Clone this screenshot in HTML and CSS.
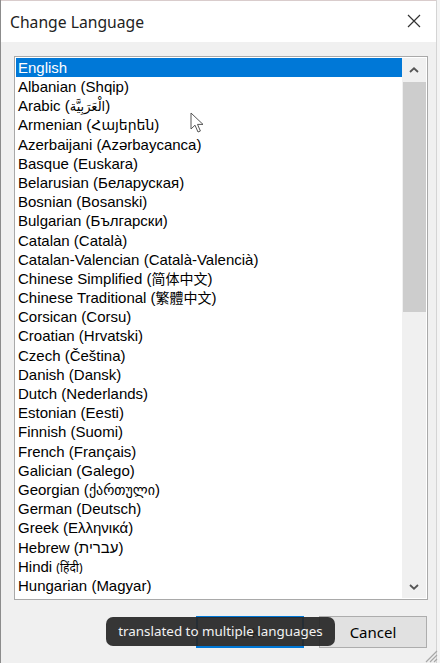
FILE: index.html
```html
<!DOCTYPE html>
<html>
<head>
<meta charset="utf-8">
<link rel="stylesheet" href="styles.css">
</head>
<body>
<div class="dialog">
  <div class="titlebar">
    <span class="title">Change Language</span>
    <svg class="close" width="14" height="14" viewBox="0 0 14 14"><path d="M1 1L13 13M13 1L1 13" stroke="#333" stroke-width="1.2" fill="none"/></svg>
  </div>
  <div class="content">
    <div class="listbox">
      <ul class="items">
        <li class="sel">English</li>
        <li>Albanian (Shqip)</li>
        <li>Arabic (<span class="ar">الْعَرَبِيَّة</span>)</li>
        <li>Armenian (<span class="alt">Հայերեն</span>)</li>
        <li>Azerbaijani (Azərbaycanca)</li>
        <li>Basque (Euskara)</li>
        <li>Belarusian (Беларуская)</li>
        <li>Bosnian (Bosanski)</li>
        <li>Bulgarian (Български)</li>
        <li>Catalan (Català)</li>
        <li>Catalan-Valencian (Català-Valencià)</li>
        <li>Chinese Simplified (<span class="cjk">简体中文</span>)</li>
        <li>Chinese Traditional (<span class="cjk tc">繁體中文</span>)</li>
        <li>Corsican (Corsu)</li>
        <li>Croatian (Hrvatski)</li>
        <li>Czech (Čeština)</li>
        <li>Danish (Dansk)</li>
        <li>Dutch (Nederlands)</li>
        <li>Estonian (Eesti)</li>
        <li>Finnish (Suomi)</li>
        <li>French (Français)</li>
        <li>Galician (Galego)</li>
        <li>Georgian (<span class="alt">ქართული</span>)</li>
        <li>German (Deutsch)</li>
        <li>Greek (Ελληνικά)</li>
        <li>Hebrew (עברית)</li>
        <li>Hindi <span class="hi">(हिंदी)</span></li>
        <li>Hungarian (Magyar)</li>
      </ul>
      <div class="scrollbar">
        <div class="arrow"><svg width="10" height="6" viewBox="0 0 10 6"><path d="M1 5L5 1.3L9 5" stroke="#555" stroke-width="1.8" fill="none"/></svg></div>
        <div class="track">
          <div class="thumb"></div>
        </div>
        <div class="arrow"><svg width="10" height="6" viewBox="0 0 10 6"><path d="M1 1L5 4.7L9 1" stroke="#555" stroke-width="1.8" fill="none"/></svg></div>
      </div>
    </div>
    <div class="buttons">
      <button class="btn ok">OK</button>
      <button class="btn">Cancel</button>
    </div>
  </div>
  <div class="tooltip">translated to multiple languages</div>
  <svg class="cursor" width="16" height="22" viewBox="0 0 16 22"><path d="M1 1L1 17L5 13.2L8 20L10.4 19L7.5 12.4L13 12.4Z" fill="#fff" stroke="#555" stroke-width="1" stroke-linejoin="round"/></svg>
  <svg class="grip" width="16" height="16" viewBox="0 0 16 16"><path d="M15 4L4 15M15 8L8 15M15 12L12 15" stroke="#a8a8a8" stroke-width="1.2"/></svg>
</div>
</body>
</html>
```
FILE: styles.css
```css
html, body {
  margin: 0;
  padding: 0;
}
body {
  width: 440px;
  height: 663px;
  overflow: hidden;
  background: #f4f4f4;
}
.dialog {
  position: relative;
  width: 437px;
  height: 663px;
  background: #f0f0f0;
  border-left: 1px solid #8c8c8c;
  border-right: 1px solid #d4d4d4;
  box-sizing: border-box;
  display: flex;
  flex-direction: column;
}
.titlebar {
  height: 42px;
  flex: none;
  background: #fff;
  display: flex;
  align-items: center;
  justify-content: space-between;
  padding: 0 15px 0 9px;
  border-top: 1px solid #d9cccc;
  box-sizing: border-box;
}
.title {
  font-family: "Noto Sans", "Open Sans", sans-serif;
  font-size: 15.7px;
  color: #222;
  margin-top: 1px;
}
.close {
  margin-top: -1px;
}
.content {
  padding: 14px 0 0 13px;
}
.listbox {
  width: 414px;
  height: 544px;
  box-sizing: border-box;
  border: 1px solid #a9a9a9;
  padding: 1px;
  background: #fff;
  display: flex;
}
.items {
  list-style: none;
  margin: 0;
  padding: 0;
  width: 386px;
  flex: none;
  font-family: "Liberation Sans", Arial, "DejaVu Sans", "Noto Sans CJK SC", sans-serif;
  font-size: 15px;
  color: #000;
}
.items li {
  height: 19.2px;
  line-height: 19.2px;
  padding-left: 2px;
  white-space: nowrap;
}
.items li.sel {
  background: #0078d7;
  color: #fff;
  height: 19px;
}
.ar {
  font-family: "DejaVu Sans", sans-serif;
  font-size: 13px;
}
.alt {
  font-family: "DejaVu Sans", sans-serif;
  font-size: 14px;
}
.cjk {
  font-family: "Noto Sans CJK SC", sans-serif;
  font-size: 14px;
}
.cjk.tc {
  font-family: "Noto Sans CJK TC", sans-serif;
}
.hi {
  font-family: "Noto Sans", "DejaVu Sans", sans-serif;
  font-size: 12px;
}
.scrollbar {
  width: 24px;
  flex: none;
  background: #f0f0f0;
  display: flex;
  flex-direction: column;
}
.arrow {
  height: 23px;
  flex: none;
  display: flex;
  align-items: center;
  justify-content: center;
}
.track {
  flex: 1;
  padding-top: 1px;
}
.thumb {
  height: 230px;
  margin: 0 0 0 1px;
  background: #cdcdcd;
}
.buttons {
  display: flex;
  justify-content: flex-end;
  gap: 15px;
  padding-right: 9px;
  margin-top: 16px;
}
.btn {
  width: 108px;
  height: 32px;
  box-sizing: border-box;
  background: #e1e1e1;
  border: 1px solid #adadad;
  font-family: "Noto Sans", "Open Sans", sans-serif;
  font-size: 15px;
  color: #000;
  padding: 0;
  margin: 0;
}
.btn.ok {
  border: 2px solid #0078d7;
}
.tooltip {
  position: absolute;
  left: 105px;
  top: 617px;
  width: 229px;
  height: 29px;
  border-radius: 7px;
  background: rgba(40, 40, 40, 0.93);
  color: #f2f2f2;
  font-family: "Noto Sans", "Open Sans", sans-serif;
  font-size: 13.4px;
  line-height: 29px;
  text-align: center;
}
.cursor {
  position: absolute;
  left: 189px;
  top: 112px;
}
.grip {
  position: absolute;
  right: -2px;
  bottom: 0;
}
```
